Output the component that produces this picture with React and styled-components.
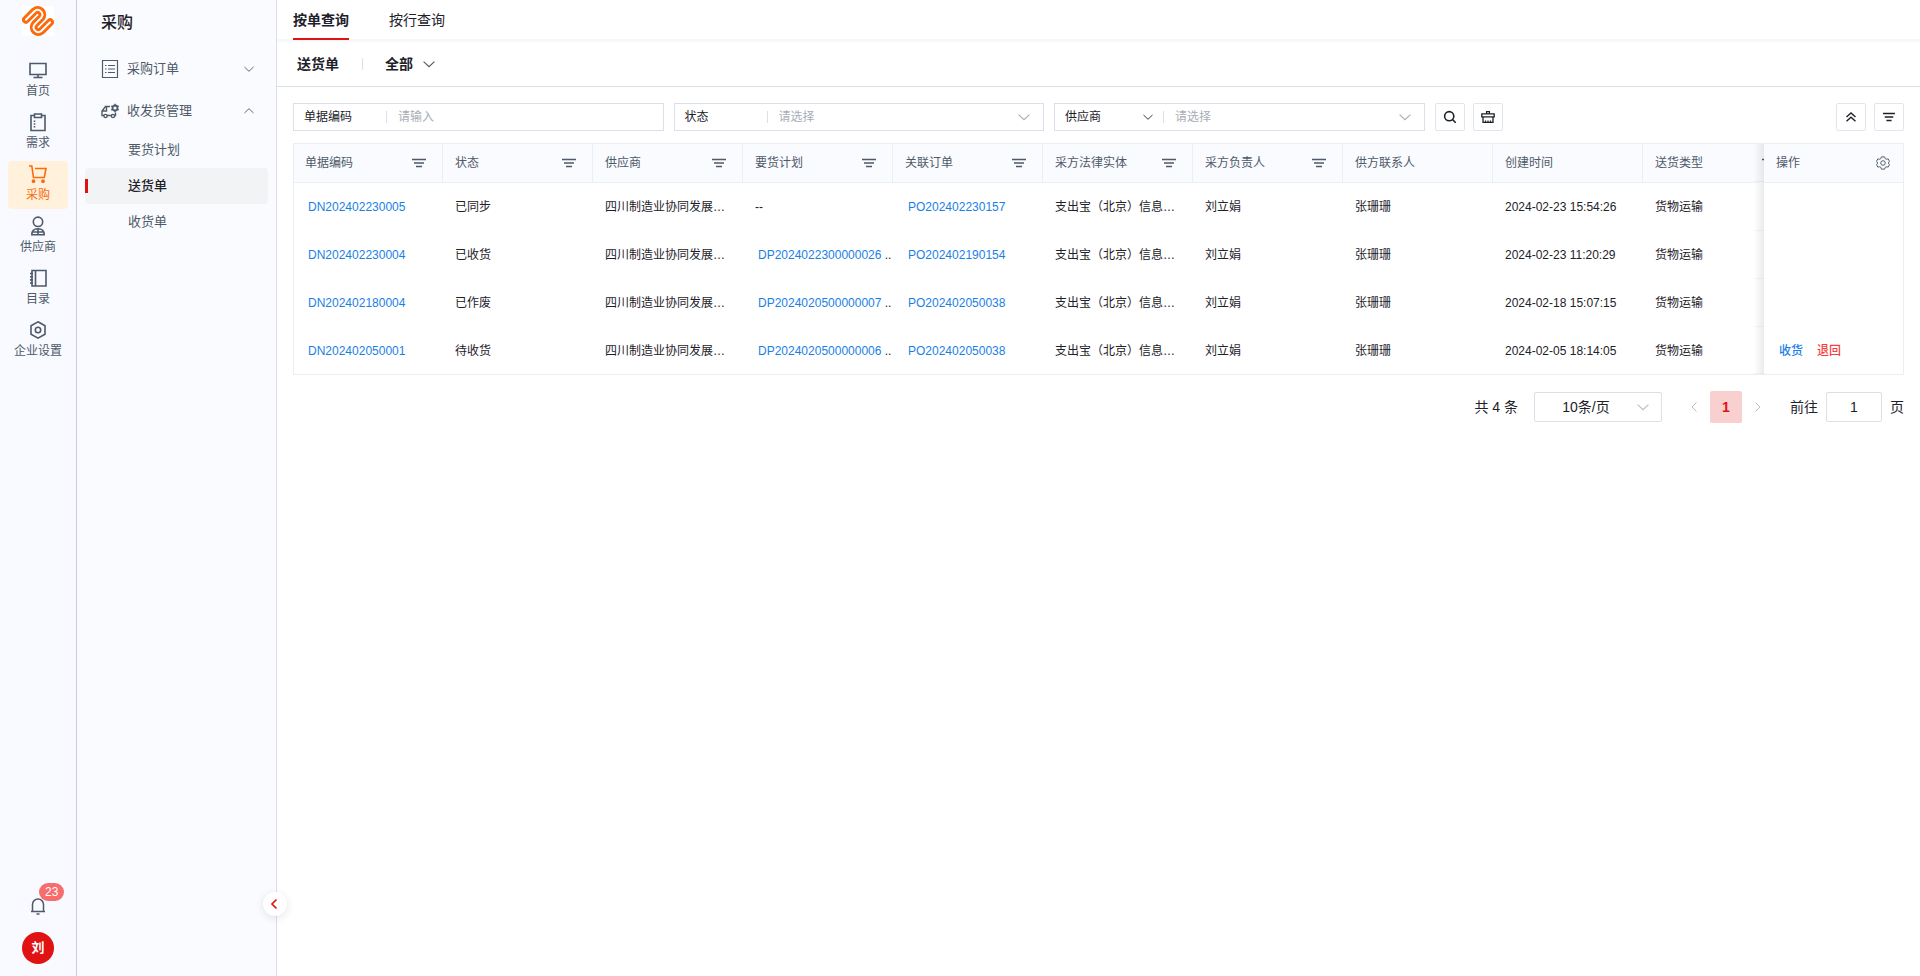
import React, { useState } from 'react'
import styled, { createGlobalStyle, css } from 'styled-components'

const menu = [
  { name: '首页', icon: 'monitor' },
  { name: '需求', icon: 'clipboard' },
  { name: '采购', icon: 'cart' },
  { name: '供应商', icon: 'user' },
  { name: '目录', icon: 'book' },
  { name: '企业设置', icon: 'hexagon' },
]

const columns = [
  { title: '单据编码', filter: true },
  { title: '状态', filter: true },
  { title: '供应商', filter: true },
  { title: '要货计划', filter: true },
  { title: '关联订单', filter: true },
  { title: '采方法律实体', filter: true },
  { title: '采方负责人', filter: true },
  { title: '供方联系人' },
  { title: '创建时间' },
  { title: '送货类型', filter: true },
]

const orders = [
  { code: 'DN202402230005', status: '已同步', plan: null, po: 'PO202402230157', time: '2024-02-23 15:54:26' },
  { code: 'DN202402230004', status: '已收货', plan: 'DP2024022300000026', po: 'PO202402190154', time: '2024-02-23 11:20:29' },
  { code: 'DN202402180004', status: '已作废', plan: 'DP2024020500000007', po: 'PO202402050038', time: '2024-02-18 15:07:15' },
  { code: 'DN202402050001', status: '待收货', plan: 'DP2024020500000006', po: 'PO202402050038', time: '2024-02-05 18:14:05', actions: true },
]

const icons = {
  monitor: (
    <>
      <path d='M2 3.500h16v11H2z' />
      <path d='M10 14.500v3M5.500 17.500h9' />
    </>
  ),
  clipboard: (
    <>
      <path d='M6.500 3.500H3v15h14v-15h-3.500' />
      <path d='M6.500 2h7v3.500h-7z' />
      <path d='M6.500 8.500v7' strokeDasharray='1.5 1.2' />
    </>
  ),
  cart: (
    <>
      <path d='M1 2h2.800l1.700 11.500h10.800L18 4.500H7' />
      <circle cx='5.500' cy='17.200' r='1.100' fill='currentColor' />
      <circle cx='15' cy='17.200' r='1.100' fill='currentColor' />
    </>
  ),
  user: (
    <>
      <circle cx='10' cy='5.800' r='4.700' />
      <path d='M3.800 18.800c0-4 2.200-6 6.200-6s6.200 2 6.200 6zM10 12.800v6M4.500 16h11' />
    </>
  ),
  book: (
    <>
      <path d='M4 2.500h14v15.500H4zM7.500 2.500V18' />
      <path d='M2 5.500h3M2 8.700h3M2 11.900h3M2 15h3' />
    </>
  ),
  hexagon: (
    <>
      <path d='M10 1.800l7 4v8.400l-7 4-7-4V5.800z' />
      <circle cx='10' cy='10' r='2.700' />
    </>
  ),
}

const Chevron = ({ up, size = 10 }) => (
  <svg width={size} height={size} viewBox='0 0 10 10' fill='none' stroke='currentColor' strokeWidth='0.900' aria-hidden='true'>
    <path d={up ? 'M.5 7L5 2.700 9.500 7' : 'M.5 3L5 7.300 9.500 3'} />
  </svg>
)

const FilterIcon = ({ width = 14 }) => (
  <svg width={width} height='10' viewBox='0 0 14 10' preserveAspectRatio='none' fill='none' stroke='currentColor' strokeWidth='1.400' aria-hidden='true'>
    <path d='M0 1.500h14M2 5h10M4 8.500h6' />
  </svg>
)

const ribbon = 'M3.900 13.800L12.700 5A4.700 4.700 0 0 1 19.300 11.600L12.700 18.400A4.700 4.700 0 0 0 19.300 25L28.100 16.200'

const Logo = () => (
  <svg width='32' height='30' viewBox='0 0 32 30' fill='none' strokeLinecap='round' aria-hidden='true'>
    <path d={ribbon} stroke='#fa6b0d' strokeWidth='7.800' />
    <path d={ribbon} stroke='#fff' strokeWidth='2' />
  </svg>
)

const App = () => {
  const [active, setActive] = useState('采购')
  const [open, setOpen] = useState(true)

  return (
    <>
      <GlobalStyle />
      <Layout>
        <Rail>
          <LogoLink href='#' aria-label='首页'><Logo /></LogoLink>
          <RailNav>
            {menu.map(item => (
              <RailItem key={item.name} $active={item.name === active} onClick={() => setActive(item.name)}>
                <svg width='20' height='20' viewBox='0 0 20 20' fill='none' stroke='currentColor' strokeWidth='1.600' aria-hidden='true'>
                  {icons[item.icon]}
                </svg>
                {item.name}
              </RailItem>
            ))}
          </RailNav>
          <Bell aria-label='消息'>
            <svg width='16' height='18' viewBox='0 0 16 18' fill='none' stroke='currentColor' strokeWidth='1.500' aria-hidden='true'>
              <path d='M2.500 14V7.500a5.500 5.500 0 0 1 11 0V14M1 14.500h14M6.500 17h3' />
            </svg>
            <Badge>23</Badge>
          </Bell>
          <Avatar>刘</Avatar>
        </Rail>

        <Side>
          <SideTitle>采购</SideTitle>
          <Group>
            <svg width='18' height='20' viewBox='0 0 18 20' fill='none' stroke='currentColor' aria-hidden='true'>
              <path d='M1.500 1.500h15v17h-15z' strokeWidth='1.200' />
              <path d='M4 6.500h1.500M7 6.500h7M4 10h1.500M7 10h7M4 13.500h1.500M7 13.500h7' />
            </svg>
            <span>采购订单</span>
            <Chevron />
          </Group>
          <Group onClick={() => setOpen(!open)}>
            <svg width='18' height='16' viewBox='0 0 18 16' fill='none' stroke='currentColor' strokeWidth='1.400' aria-hidden='true'>
              <path d='M9 3.500H4.500L1 8v4.500h2M6 12.500h5M5.500 3.500V8H1M14.500 9.500v3h-1' />
              <circle cx='4.500' cy='13' r='1.600' />
              <circle cx='12' cy='13' r='1.600' />
              <circle cx='14' cy='5' r='2.500' strokeWidth='1.800' />
              <path d='M14 .8v1.700M14 7.500v1.700M10.300 2.900l1.500.9M16.200 6.200l1.500.9M10.300 7.100l1.500-.9M16.200 3.800l1.500-.9' />
            </svg>
            <span>收发货管理</span>
            <Chevron up={open} />
          </Group>
          {open && (
            <SubMenu>
              <SubItem href='#'>要货计划</SubItem>
              <SubItem href='#' $active>送货单</SubItem>
              <SubItem href='#'>收货单</SubItem>
            </SubMenu>
          )}
          <Fold aria-label='收起'>
            <svg width='8' height='12' viewBox='0 0 8 12' fill='none' stroke='currentColor' strokeWidth='1.700' aria-hidden='true'>
              <path d='M6.500 1.500L2 6l4.500 4.500' />
            </svg>
          </Fold>
        </Side>

        <Main>
          <Tabs>
            <Tab $active>按单查询</Tab>
            <Tab>按行查询</Tab>
          </Tabs>
          <Heading>
            <h1>送货单</h1>
            <Divider />
            <ViewButton>全部 <Chevron size={12} /></ViewButton>
          </Heading>

          <Content>
            <Filters>
              <Field>
                <FieldLabel htmlFor='code'>单据编码</FieldLabel>
                <Divider />
                <FieldInput id='code' placeholder='请输入' />
              </Field>
              <Field>
                <FieldLabel htmlFor='status'>状态</FieldLabel>
                <Divider />
                <FieldSelect id='status'><option>请选择</option></FieldSelect>
                <Chevron size={12} />
              </Field>
              <Field>
                <TypeSelect aria-label='筛选字段'><option>供应商</option></TypeSelect>
                <Arrow><Chevron /></Arrow>
                <Divider />
                <FieldSelect aria-label='供应商'><option>请选择</option></FieldSelect>
                <Chevron size={12} />
              </Field>
              <Buttons>
                <IconButton aria-label='搜索'>
                  <svg width='14' height='14' viewBox='0 0 14 14' fill='none' stroke='currentColor' strokeWidth='1.600' aria-hidden='true'>
                    <circle cx='6.200' cy='6.200' r='4.600' />
                    <path d='M9.500 9.500l3.200 3.200' />
                  </svg>
                </IconButton>
                <IconButton aria-label='清空'>
                  <svg width='14' height='14' viewBox='0 0 14 14' fill='none' stroke='currentColor' strokeWidth='1.300' aria-hidden='true'>
                    <path d='M5.600 4V1.600h2.800V4M.8 3.800h12.400v3H.8zM2 6.800v5.600h10V6.800M4.500 12.400v-2M7 12.400v-2M9.500 12.400v-2' />
                  </svg>
                </IconButton>
              </Buttons>
              <Buttons $end>
                <IconButton aria-label='收起筛选'>
                  <svg width='10' height='10' viewBox='0 0 10 10' fill='none' stroke='currentColor' strokeWidth='1.400' aria-hidden='true'>
                    <path d='M.5 5L5 1l4.500 4M.5 9.300l4.500-4 4.500 4' />
                  </svg>
                </IconButton>
                <IconButton aria-label='筛选'><FilterIcon width={12} /></IconButton>
              </Buttons>
            </Filters>

            <TableWrap>
              <Table>
                <colgroup>
                  {columns.map((col, i) => <col key={col.title} width={i === 0 ? '149' : '150'} />)}
                  <col width='139' />
                </colgroup>
                <thead>
                  <tr>
                    {columns.map(col => (
                      <Th key={col.title}>
                        <ThInner>{col.title}{col.filter && <FilterIcon />}</ThInner>
                      </Th>
                    ))}
                    <FixedTh>
                      <ThInner>
                        操作
                        <svg width='14' height='14' viewBox='0 0 16 16' fill='none' stroke='currentColor' strokeWidth='1.100' aria-hidden='true'>
                          <path d='M6.200 1h3.600l.7 2 1.300.7 2.100-.4 1.500 2.800L14 8l1.400 1.900-1.500 2.800-2.100-.4-1.300.7-.7 2H6.200l-.7-2-1.300-.7-2.100.4L.6 9.900 2 8 .6 6.100l1.500-2.800 2.100.4L5.500 3z' strokeLinejoin='round' />
                          <circle cx='8' cy='8' r='2.600' />
                        </svg>
                      </ThInner>
                    </FixedTh>
                  </tr>
                </thead>
                <tbody>
                  {orders.map(order => (
                    <tr key={order.code}>
                      <Td><CellLink href='#'>{order.code}</CellLink></Td>
                      <Td>{order.status}</Td>
                      <Td>四川制造业协同发展…</Td>
                      <Td>{order.plan ? <><CellLink href='#'>{order.plan}</CellLink> ..</> : '--'}</Td>
                      <Td><CellLink href='#'>{order.po}</CellLink></Td>
                      <Td>支出宝（北京）信息…</Td>
                      <Td>刘立娟</Td>
                      <Td>张珊珊</Td>
                      <Td>{order.time}</Td>
                      <Td>货物运输</Td>
                      <FixedTd>
                        {order.actions && (
                          <Actions>
                            <Action>收货</Action>
                            <Action $danger>退回</Action>
                          </Actions>
                        )}
                      </FixedTd>
                    </tr>
                  ))}
                </tbody>
              </Table>
            </TableWrap>

            <Pagination>
              <span>共 4 条</span>
              <PageSize>
                <select aria-label='每页条数'><option>10条/页</option></select>
                <Chevron size={12} />
              </PageSize>
              <Pager>
                <PageArrow aria-label='上一页'>
                  <svg width='6' height='10' viewBox='0 0 6 10' fill='none' stroke='currentColor' aria-hidden='true'><path d='M5.500.5L1 5l4.500 4.500' /></svg>
                </PageArrow>
                <PageNumber>1</PageNumber>
                <PageArrow aria-label='下一页'>
                  <svg width='6' height='10' viewBox='0 0 6 10' fill='none' stroke='currentColor' aria-hidden='true'><path d='M.5.5L5 5 .5 9.500' /></svg>
                </PageArrow>
              </Pager>
              <Jump>前往 <input aria-label='页码' defaultValue='1' /> 页</Jump>
            </Pagination>
          </Content>
        </Main>
      </Layout>
    </>
  )
}

const GlobalStyle = createGlobalStyle`
  * {
    box-sizing: border-box;
  }
  body {
    margin: 0;
    color: #1d2129;
    background: #fff;
  }
  body, button, input, select {
    font-family: 'Liberation Sans', 'Noto Sans CJK SC', sans-serif;
    font-size: 12px;
    line-height: 18px;
  }
  button {
    padding: 0;
    border: 0;
    background: none;
    color: inherit;
    cursor: pointer;
  }
  select, input {
    appearance: none;
    border: 0;
    outline: 0;
    padding: 0;
    background: none;
    color: inherit;
  }
  a {
    text-decoration: none;
  }
  svg {
    display: block;
    flex-shrink: 0;
  }
`

const Layout = styled.div`
  display: flex;
  min-height: 100vh;
`

const Rail = styled.aside`
  display: flex;
  flex-direction: column;
  align-items: center;
  width: 77px;
  flex-shrink: 0;
  padding: 6px 0 12px;
  background: #f8faff;
  border-right: 1px solid #c9cbdc;
  color: #4e5969;
`

const LogoLink = styled.a`
  background: #fff;
`

const RailNav = styled.nav`
  display: flex;
  flex-direction: column;
  gap: 4px;
  margin: 21px 0 auto;
`

const RailItem = styled.button`
  display: flex;
  flex-direction: column;
  align-items: center;
  gap: 2px;
  width: 60px;
  height: 48px;
  padding-top: 3px;
  border-radius: 4px;
  white-space: nowrap;
  ${props => props.$active && css`
    color: #fa6b0d;
    background: #fff1dc;
  `}
`

const Bell = styled.button`
  position: relative;
  margin-bottom: 17px;
`

const Badge = styled.span`
  position: absolute;
  left: 9px;
  top: -14px;
  padding: 0 6px;
  border-radius: 9px;
  background: #f76c6c;
  color: #fff;
`

const Avatar = styled.div`
  width: 32px;
  height: 32px;
  border-radius: 50%;
  background: #e01212;
  color: #fff;
  font-size: 13px;
  font-weight: 700;
  line-height: 32px;
  text-align: center;
`

const Side = styled.aside`
  position: relative;
  width: 200px;
  flex-shrink: 0;
  padding: 11px 8px;
  background: #fafbfe;
  border-right: 1px solid #dcdfe8;
`

const SideTitle = styled.h2`
  margin: 0 0 13px;
  padding-left: 16px;
  font-size: 16px;
  font-weight: 500;
  line-height: 24px;
`

const Group = styled.button`
  display: flex;
  align-items: center;
  width: 100%;
  height: 42px;
  padding: 0 14px 0 16px;
  color: #4e5969;
  font-size: 13px;
  text-align: left;
  span {
    flex: 1;
    margin-left: 8px;
  }
`

const SubMenu = styled.div`
  display: flex;
  flex-direction: column;
`

const SubItem = styled.a`
  padding-left: 43px;
  border-radius: 4px;
  color: #4e5969;
  font-size: 13px;
  line-height: 36px;
  ${props => props.$active && css`
    display: flex;
    align-items: center;
    padding-left: 0;
    background: #f2f3f5;
    color: #1d2129;
    font-weight: 500;
    &:before {
      content: '';
      width: 3px;
      height: 14px;
      margin-right: 40px;
      background: #e01212;
    }
  `}
`

const Fold = styled.button`
  position: absolute;
  right: -11px;
  bottom: 60px;
  display: flex;
  align-items: center;
  justify-content: center;
  width: 24px;
  height: 24px;
  padding-right: 2px;
  border-radius: 50%;
  background: #fff;
  color: #e01212;
  box-shadow: 0 2px 8px rgba(0, 0, 0, 0.1);
  z-index: 3;
`

const Main = styled.main`
  flex: 1;
  min-width: 0;
`

const Tabs = styled.div`
  display: flex;
  gap: 40px;
  height: 42px;
  padding: 0 16px;
  border-bottom: 3px solid #f7f8fa;
`

const Tab = styled.button`
  height: 40px;
  padding-top: 2px;
  font-size: 14px;
  border-bottom: 2px solid transparent;
  ${props => props.$active && css`
    font-weight: 700;
    border-color: #e01212;
  `}
`

const Divider = styled.span`
  width: 1px;
  height: 12px;
  flex-shrink: 0;
  background: #dcdfe8;
`

const Heading = styled.div`
  display: flex;
  align-items: center;
  height: 45px;
  padding-left: 20px;
  border-bottom: 1px solid #dcdfe8;
  h1 {
    margin: 0 23px 0 0;
    font-size: 14px;
    font-weight: 700;
  }
`

const ViewButton = styled.button`
  display: flex;
  align-items: center;
  gap: 10px;
  margin-left: 22px;
  font-size: 14px;
  font-weight: 700;
  svg {
    color: #4e5969;
  }
`

const Content = styled.div`
  padding: 16px;
`

const Filters = styled.form`
  display: flex;
  gap: 10px;
  margin-bottom: 12px;
`

const Field = styled.div`
  display: flex;
  align-items: center;
  flex: 0 0 23%;
  height: 28px;
  padding: 0 13px 0 10px;
  border: 1px solid #dcdfe8;
  color: #a9adb6;
`

const FieldLabel = styled.label`
  width: 82px;
  color: #1d2129;
`

const FieldInput = styled.input`
  flex: 1;
  min-width: 0;
  margin-left: 11px;
  color: #1d2129;
  &::placeholder {
    color: #a9adb6;
  }
`

const FieldSelect = styled.select`
  flex: 1;
  min-width: 0;
  margin-left: 11px;
`

const TypeSelect = styled.select`
  width: 78px;
  color: #1d2129;
`

const Arrow = styled.span`
  margin-right: 10px;
  color: #1d2129;
`

const Buttons = styled.div`
  display: flex;
  gap: 8px;
  margin-left: ${props => props.$end ? 'auto' : '0'};
`

const IconButton = styled.button.attrs({ type: 'button' })`
  display: flex;
  align-items: center;
  justify-content: center;
  width: 30px;
  height: 28px;
  border: 1px solid #e3e5ec;
  border-radius: 2px;
`

const TableWrap = styled.div`
  overflow-x: auto;
  border: 1px solid #ebeef5;
  scrollbar-width: none;
`

const Table = styled.table`
  width: 1638px;
  table-layout: fixed;
  border-spacing: 0;
  tr:last-child td {
    height: 47px;
  }
`

const Th = styled.th`
  height: 39px;
  padding: 0 16px 0 12px;
  border-right: 1px solid #ebeef5;
  border-bottom: 1px solid #ebeef5;
  background: #fafbfe;
  color: #4e5969;
  font-weight: 400;
  text-align: left;
  &:first-child {
    padding-left: 11px;
  }
`

const ThInner = styled.div`
  display: flex;
  align-items: center;
  justify-content: space-between;
`

const Td = styled.td`
  height: 48px;
  padding: 0 0 0 12px;
  overflow: hidden;
  white-space: nowrap;
  &:first-child {
    padding-left: 11px;
  }
`

// keeps the action column in view, with a shadow over the cells below it
const fixed = css`
  position: sticky;
  right: 0;
  overflow: visible;
  &:before {
    content: '';
    position: absolute;
    top: 0;
    bottom: 0;
    left: -10px;
    width: 10px;
    border-bottom: 1px solid rgba(0, 0, 0, 0.04);
    background: linear-gradient(to left, rgba(0, 0, 0, 0.08), rgba(0, 0, 0, 0));
  }
`

const FixedTh = styled(Th)`
  ${fixed}
  padding-right: 13px;
  border-right: 0;
`

const FixedTd = styled(Td)`
  ${fixed}
  background: #fff;
`

const CellLink = styled.a`
  padding: 0 0 0 3px;
  color: #1a7fe5;
`

const Actions = styled.div`
  display: flex;
  gap: 14px;
  padding-left: 3px;
`

const Action = styled.button`
  color: ${props => props.$danger ? '#f53f3f' : '#1a7fe5'};
  font-weight: 500;
`

const Pagination = styled.div`
  display: flex;
  align-items: center;
  justify-content: flex-end;
  margin-top: 16px;
  font-size: 14px;
`

const PageSize = styled.div`
  display: flex;
  align-items: center;
  width: 128px;
  height: 30px;
  margin: 0 18px 0 16px;
  padding-right: 12px;
  border: 1px solid #dcdfe8;
  border-radius: 2px;
  color: #b9bcc6;
  select {
    flex: 1;
    min-width: 0;
    color: #1d2129;
    font-size: 14px;
    text-align: center;
    text-align-last: center;
  }
`

const Pager = styled.div`
  display: flex;
  align-items: center;
  gap: 2px;
`

const PageArrow = styled.button`
  display: flex;
  align-items: center;
  justify-content: center;
  width: 28px;
  height: 32px;
  color: #b9bcc6;
`

const PageNumber = styled.button`
  width: 32px;
  height: 32px;
  border-radius: 2px;
  background: #f9d0d0;
  color: #e01212;
  font-size: 14px;
  font-weight: 700;
`

const Jump = styled.label`
  display: flex;
  align-items: center;
  gap: 8px;
  margin-left: 18px;
  input {
    width: 56px;
    height: 30px;
    border: 1px solid #dcdfe8;
    border-radius: 2px;
    font-size: 14px;
    text-align: center;
  }
`

export default App
